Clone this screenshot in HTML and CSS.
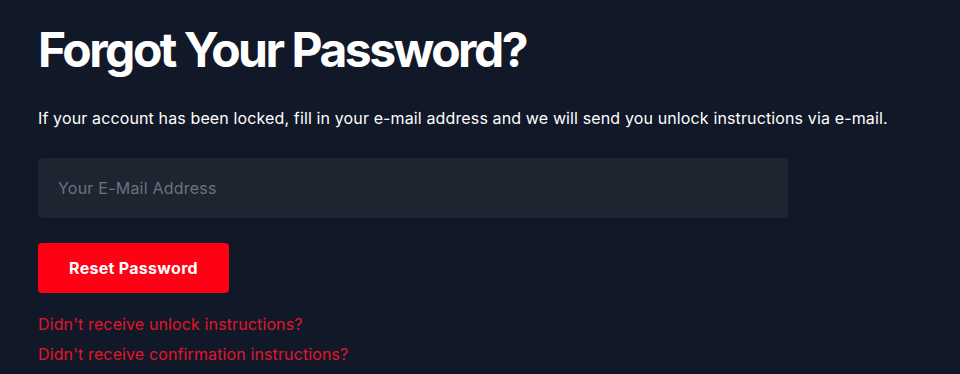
FILE: index.html
```html
<!DOCTYPE html>
<html lang="en">
<head>
<meta charset="utf-8">
<title>Forgot Your Password?</title>
<link rel="stylesheet" href="styles.css">
</head>
<body>
<main class="page">
  <h1 class="title">Forgot Your Password?</h1>
  <p class="lead">If your account has been locked, fill in your e-mail address and we will send you unlock instructions via e-mail.</p>
  <form class="form">
    <input class="field" type="email" placeholder="Your E-Mail Address">
    <button class="btn" type="button">Reset Password</button>
  </form>
  <nav class="links">
    <a class="link" href="#">Didn't receive unlock instructions?</a>
    <a class="link" href="#">Didn't receive confirmation instructions?</a>
  </nav>
</main>
</body>
</html>
```
FILE: styles.css
```css
html, body {
  margin: 0;
  padding: 0;
  background: #111827;
}
body {
  font-family: Inter, "Liberation Sans", sans-serif;
  color: #ffffff;
}
.page {
  padding: 26px 38px 0;
  display: flex;
  flex-direction: column;
}
.title {
  margin: 0;
  font-size: 48px;
  line-height: 1;
  font-weight: 700;
  letter-spacing: -2.5px;
}
.lead {
  margin: 32px 0 0;
  font-size: 16px;
  line-height: 24px;
  letter-spacing: 0.13px;
}
.form {
  margin-top: 28px;
  display: flex;
  flex-direction: column;
  align-items: flex-start;
  gap: 25px;
}
.field {
  box-sizing: border-box;
  width: 750px;
  height: 60px;
  padding: 0 20px;
  background: #1f2431;
  border: none;
  border-radius: 4px;
  font-family: Inter, sans-serif;
  font-size: 16px;
  letter-spacing: 0.22px;
  color: #fff;
  outline: none;
}
.field::placeholder {
  color: #6b7280;
}
.btn {
  box-sizing: border-box;
  width: 191px;
  height: 50px;
  background: #ff0015;
  border: none;
  border-radius: 4px;
  color: #fff;
  font-family: Inter, sans-serif;
  font-weight: 700;
  font-size: 16px;
  letter-spacing: 0.3px;
}
.links {
  margin-top: 19px;
  display: flex;
  flex-direction: column;
  gap: 6px;
}
.link {
  color: #e3152d;
  text-decoration: none;
  font-family: Inter, sans-serif;
  font-size: 16px;
  line-height: 24px;
  letter-spacing: 0.12px;
}
```
